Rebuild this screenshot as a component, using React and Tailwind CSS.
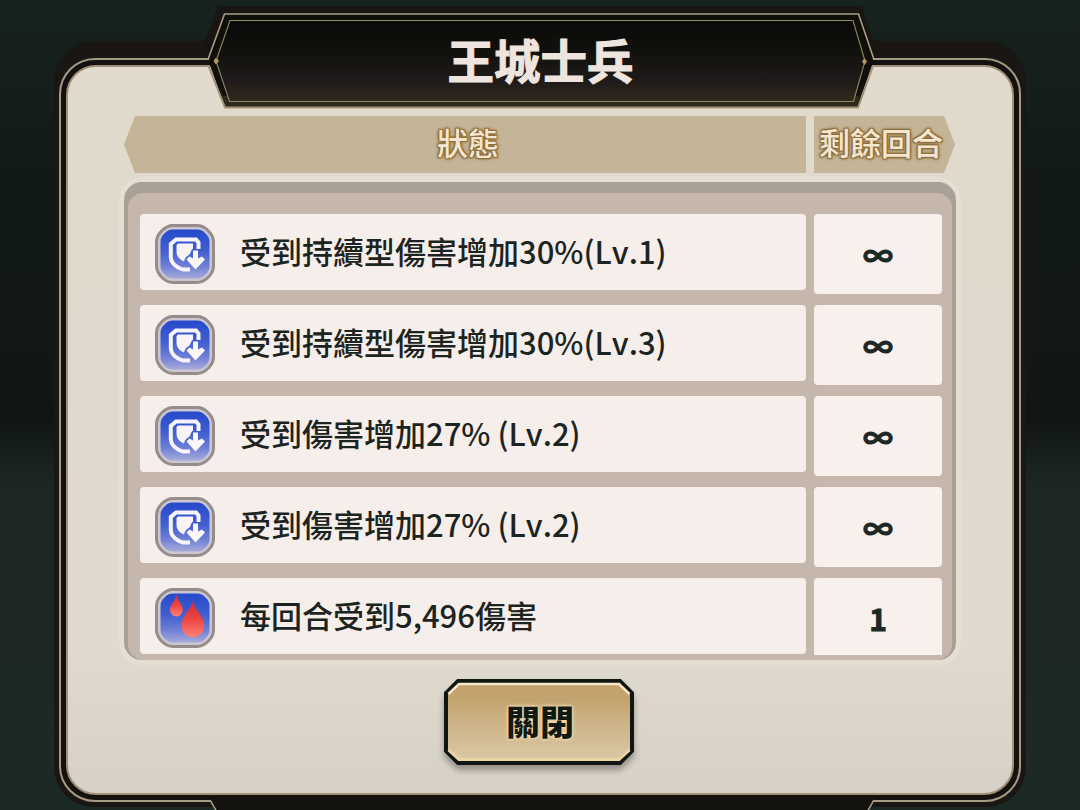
import React from "react";

const statuses = [
  { icon: "shield", text: "受到持續型傷害增加30%(Lv.1)", turns: "∞" },
  { icon: "shield", text: "受到持續型傷害增加30%(Lv.3)", turns: "∞" },
  { icon: "shield", text: "受到傷害增加27% (Lv.2)", turns: "∞" },
  { icon: "shield", text: "受到傷害增加27% (Lv.2)", turns: "∞" },
  { icon: "blood", text: "每回合受到5,496傷害", turns: "1" },
];

const StatusIcon = ({ type }) => (
  <svg viewBox="0 0 60 60" className="h-[60px] w-[60px] shrink-0">
    <defs>
      <linearGradient id="iconBlue" x1="0" y1="0" x2="0" y2="1">
        <stop offset="0" stopColor="#2549cb" />
        <stop offset="0.45" stopColor="#4260cf" />
        <stop offset="0.75" stopColor="#6f80d6" />
        <stop offset="1" stopColor="#a7abd9" />
      </linearGradient>
      <linearGradient id="iconRed" x1="0" y1="0" x2="0" y2="1">
        <stop offset="0" stopColor="#d02c3c" />
        <stop offset="0.5" stopColor="#ee4540" />
        <stop offset="1" stopColor="#ff8078" />
      </linearGradient>
    </defs>
    <path
      d="M18 1.500H42C47 1.500 50 3.500 53 6.500S58.500 13 58.500 18V42C58.500 47 56.500 50 53.500 53S47 58.500 42 58.500H18C13 58.500 10 56.500 7 53.500S1.500 47 1.500 42V18C1.500 13 3.500 10 6.500 7S13 1.500 18 1.500Z"
      fill="#cbc7d2"
      stroke="#968d8b"
      strokeWidth="3"
    />
    <path
      d="M18 5.500H42C46 5.500 48 7 50.500 9.500S54.500 14 54.500 18V42C54.500 46 53 48 50.500 50.500S46 54.500 42 54.500H18C14 54.500 12 53 9.500 50.500S5.500 46 5.500 42V18C5.500 14 7 12 9.500 9.500S14 5.500 18 5.500Z"
      fill="url(#iconBlue)"
    />
    {type === "shield" ? (
      <>
        <path
          d="M43.500 25V18.500L41 15.500H21L15.800 20V33C16 39 20 42 24 44L28 45.500H35"
          fill="none"
          stroke="#f7f3fb"
          strokeWidth="4"
        />
        <path
          d="M23 19.500H38V24.500C35 27 36.500 29.500 33 31.500C31.500 32.500 30 33.500 29 37.500C25 36 21.500 32.500 21.500 28V21Z"
          fill="#f8f4f6"
        />
        <path
          d="M38 26.500H43V34.500L47 32.500L50 35.500L40.500 45.500L31.500 35.500L34.500 32.500L38 34.500Z"
          fill="#fbf7f8"
        />
      </>
    ) : (
      <>
        <path
          d="M21.500 6.500C22.500 13 27.800 16 27.800 22A6.400 6.400 0 0 1 15 22C15 16 20.500 13 21.500 6.500Z"
          fill="url(#iconRed)"
        />
        <path
          d="M37.800 13C39.500 22 49 27 49 38A11.200 11.200 0 0 1 26.600 38C26.600 27 36 22 37.800 13Z"
          fill="url(#iconRed)"
        />
      </>
    )}
  </svg>
);

const StatusRow = ({ icon, text, turns }) => (
  <div className="flex shrink-0 items-start gap-2">
    <div className="flex h-[76px] w-[666px] shrink-0 items-center rounded-[4px] bg-[#f6eeea] pt-1 pl-[15px]">
      <StatusIcon type={icon} />
      <span className="-mt-2 ml-[25px] text-[31px] leading-none font-medium whitespace-pre text-[#1c2421] [font-kerning:none]">
        {text}
      </span>
    </div>
    <div className="flex h-20 w-32 shrink-0 items-center justify-center rounded-[4px] bg-[#f8f0ec] text-[30px] leading-none font-bold text-[#1c2825] [-webkit-text-stroke:1px_#1c2825]">
      {turns}
    </div>
  </div>
);

const TitlePlate = () => (
  <div className="absolute top-0 left-1/2 flex h-[110px] w-[680px] -translate-x-1/2 items-center justify-center">
    <svg viewBox="200 0 680 110" className="absolute inset-0 h-full w-full">
      <defs>
        <linearGradient id="plate" x1="0" y1="0" x2="0" y2="1">
          <stop offset="0" stopColor="#090a09" />
          <stop offset="0.4" stopColor="#11120d" />
          <stop offset="0.75" stopColor="#201a1b" />
          <stop offset="1" stopColor="#302a1c" />
        </linearGradient>
      </defs>
      <path d="M203 42Q207 39 208 34L218 6H862L871 34Q873 41 878 42V58H203Z" fill="#181513" />
      <path d="M208.500 61L224.500 14H858.500L873.500 61L857.500 107.500H225Z" fill="#0d0d09" />
      <path d="M212 62H870L857 107H225Z" fill="#2e281d" />
      <path d="M209 62L224 20H858L872 62L859 96H223Z" fill="#100f0c" />
      <path d="M208 59.500L224.500 14H858.500L874 59.500" fill="none" stroke="#aa9d82" strokeWidth="1.600" />
      <path d="M208.500 66L225 107.500H858L873 66" fill="none" stroke="#a49275" strokeWidth="2" />
      <path
        d="M216 61L230 20.500H853L865 61L853.500 101.500H229.500Z"
        fill="url(#plate)"
        stroke="#918762"
        strokeWidth="1.100"
      />
      <path d="M216 57.500L219 61L216 64.500L213.500 61ZM864.500 58L867 61.500L864.500 65L862 61.500Z" fill="#b39b61" />
    </svg>
    <h1 className="relative mt-[9px] ml-px text-[46.500px] leading-none font-bold text-[#eee5de] [-webkit-text-stroke:1px_#eee5de]">
      王城士兵
    </h1>
  </div>
);

const CloseButton = () => (
  <button className="relative mt-[18px] ml-[376px] flex h-[88px] w-[190px] shrink-0 items-center justify-center">
    <svg
      viewBox="0 0 190 88"
      className="absolute inset-0 h-full w-full overflow-visible drop-shadow-[0_5px_3px_rgba(40,40,35,0.4)]"
    >
      <defs>
        <linearGradient id="gold" x1="0" y1="0" x2="0" y2="1">
          <stop offset="0" stopColor="#c2a06b" />
          <stop offset="0.22" stopColor="#c3a470" />
          <stop offset="1" stopColor="#dccaa9" />
        </linearGradient>
      </defs>
      <path
        d="M14 3H176L188 15V73L176 85H14L2 73V15Z"
        fill="url(#gold)"
        stroke="#101713"
        strokeWidth="4"
      />
      <path d="M4.500 16L15 6H175L185.500 16" fill="none" stroke="#f8e7c6" strokeWidth="2.500" />
      <path d="M4.500 72L15 81.500H175L185.500 72" fill="none" stroke="#edd4a4" strokeWidth="3" />
    </svg>
    <span className="relative -mt-0.5 ml-0.5 text-[34px] leading-none font-black text-[#111915] [text-shadow:0_0_2px_#f4deb5,0_0_3px_#f4deb5,0_0_4px_#f4deb5]">
      關閉
    </span>
  </button>
);

const headText =
  "text-[31px] leading-none font-medium text-[#f5e6d3] [text-shadow:1px_1px_1px_#8f6f3a,-1px_-1px_1px_#8f6f3a,1px_-1px_1px_#8f6f3a,-1px_1px_1px_#8f6f3a,0_0_3px_#8b6b35,0_0_4px_#8b6b35]";

const App = () => {
  return (
    <div
      lang="zh-Hant"
      className="relative h-[810px] w-[1080px] overflow-hidden bg-[linear-gradient(180deg,#17231f_0%,#121a18_20%,#101615_52%,#1c2723_60%,#1d2824_80%,#1b2925_100%)] px-[54px] pt-[41px] font-['Noto_Sans_CJK_TC',sans-serif]"
    >
      {/* gold lined frame */}
      <div className="h-[766px] w-[972px] rounded-[40px] bg-[#1a1613] px-[5px] pt-[17px] pb-[5px]">
        <div className="h-full rounded-[36px] border-2 border-[#a59a83] bg-[#14120f] p-[5px]">
          <div className="flex h-full flex-col rounded-[30px] border-2 border-[#a29078] bg-[linear-gradient(180deg,#e1dacd_0%,#dfdacd_40%,#e0dbce_80%,#d6d0c6_100%)] pt-[49px]">
            <div className="ml-[56px] flex h-[57px] w-[832px] shrink-0 gap-2">
              <div className="flex w-[682px] shrink-0 items-center justify-center bg-[#c5b598] pb-1.5 pl-[6px] [clip-path:polygon(11px_0,100%_0,100%_100%,11px_100%,0_50%)]">
                <span className={headText}>狀態</span>
              </div>
              <div className="flex w-[141px] shrink-0 items-center bg-[#c5b598] pb-1.5 pl-[5px] [clip-path:polygon(0_0,130px_0,100%_50%,130px_100%,0_100%)]">
                <span className={headText}>剩餘回合</span>
              </div>
            </div>

            <div className="mt-[9px] ml-[56px] h-[478px] w-[832px] shrink-0 rounded-[18px] bg-[#aaa196] px-1 pt-[11px] shadow-[0_0_0_5px_#e4dfd2]">
              <div className="h-full overflow-hidden rounded-t-[15px] rounded-b-[16px] bg-[#c5b7ac] pt-[21px] pr-2.5 pb-[5px] pl-3">
                <div className="flex h-full flex-col gap-[11px] overflow-hidden">
                  {statuses.map((status, i) => (
                    <StatusRow key={i} {...status} />
                  ))}
                </div>
              </div>
            </div>

            <CloseButton />
          </div>
        </div>
      </div>

      <TitlePlate />

      {/* lower plate peeking in from under the frame */}
      <svg viewBox="200 799 684 11" className="absolute bottom-0 left-[200px] h-[11px] w-[684px]">
        <path d="M210 799H874L868 810H216Z" fill="#14120f" />
        <path d="M210 800L217 812M874 800L867 812" fill="none" stroke="#a59a83" strokeWidth="1.500" />
      </svg>
    </div>
  );
};

export default App;
